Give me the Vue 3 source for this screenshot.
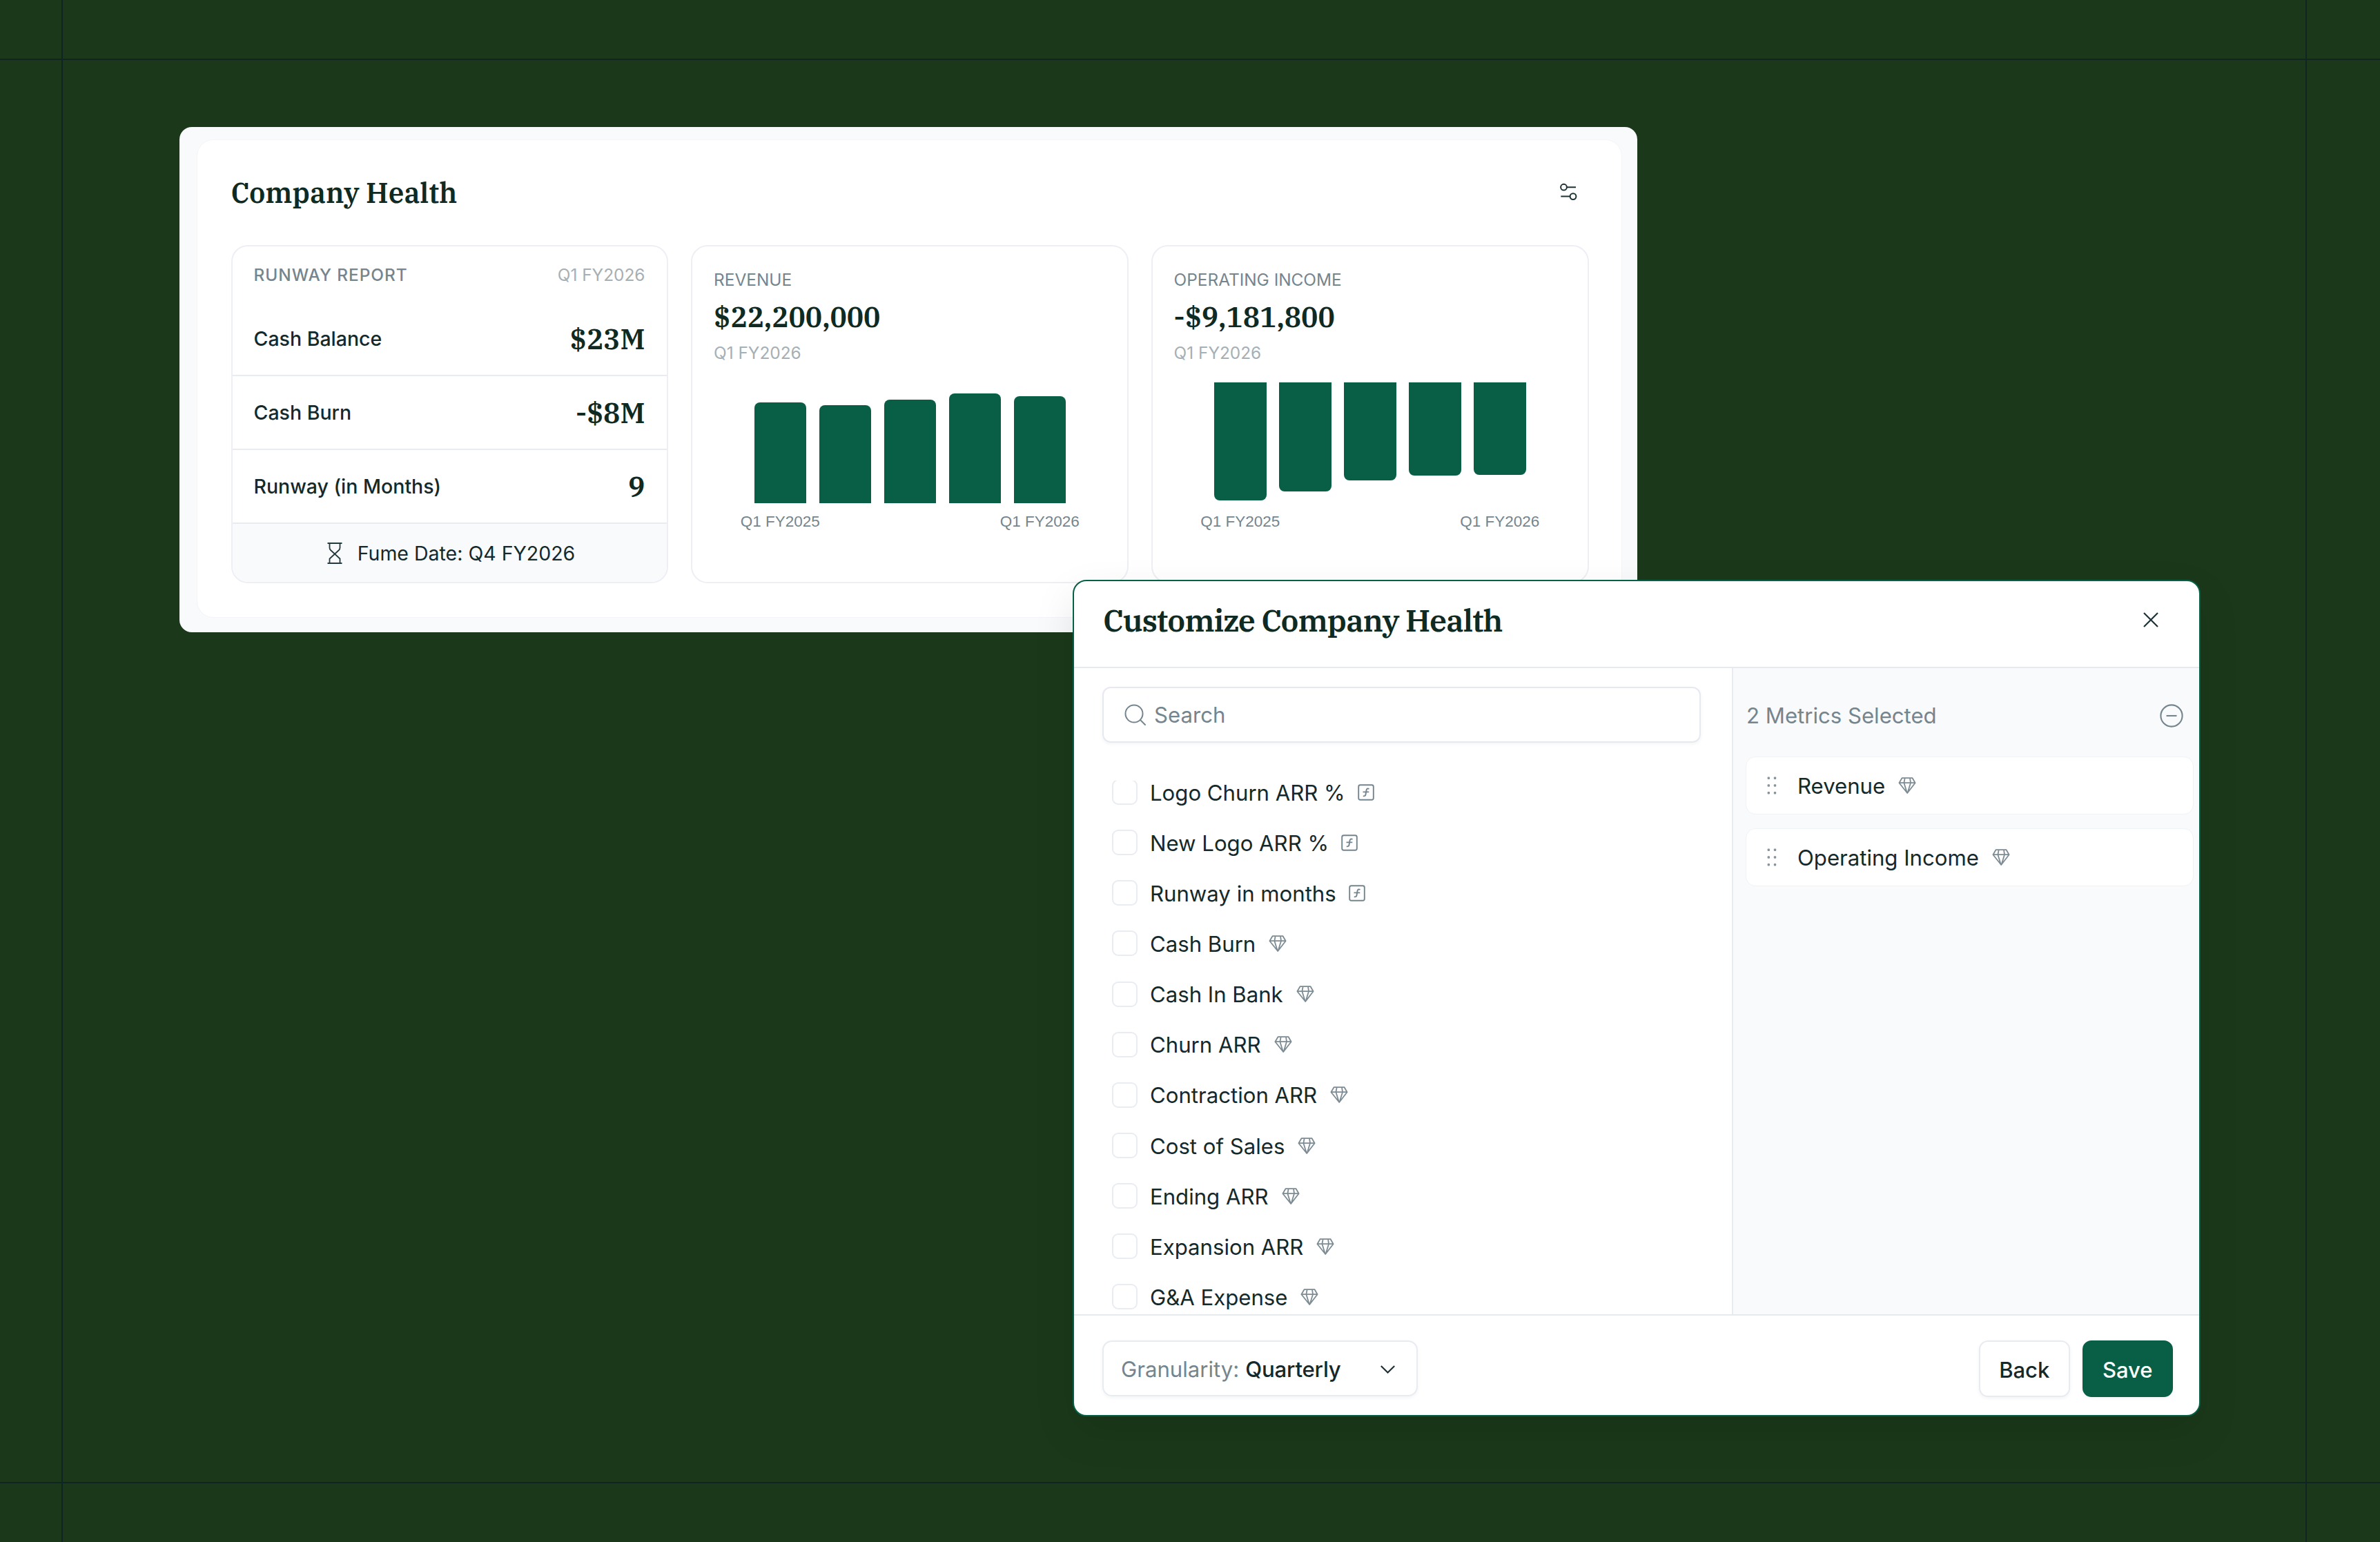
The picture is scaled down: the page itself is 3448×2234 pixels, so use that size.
<script setup>
const runway = [
  { label: 'Cash Balance', value: '$23M' },
  { label: 'Cash Burn', value: '-$8M' },
  { label: 'Runway (in Months)', value: '9' },
]

const metricCards = [
  { name: 'REVENUE', value: '$22,200,000', bars: [146.5, 142.3, 149.6, 159.5, 155], negative: false },
  { name: 'OPERATING INCOME', value: '-$9,181,800', bars: [171, 157.7, 142, 134.5, 133.6], negative: true },
]

const metrics = [
  { name: 'Logo Churn ARR %', formula: true },
  { name: 'New Logo ARR %', formula: true },
  { name: 'Runway in months', formula: true },
  { name: 'Cash Burn' },
  { name: 'Cash In Bank' },
  { name: 'Churn ARR' },
  { name: 'Contraction ARR' },
  { name: 'Cost of Sales' },
  { name: 'Ending ARR' },
  { name: 'Expansion ARR' },
  { name: 'G&A Expense' },
]

const selected = ['Revenue', 'Operating Income']
</script>

<template>
  <main class="canvas">
    <i class="guide v left"></i>
    <i class="guide v right"></i>
    <i class="guide h top"></i>
    <i class="guide h bottom"></i>

    <section class="health">
      <div class="health-inner">
        <header class="health-head">
          <h1>Company Health</h1>
          <svg class="sliders" viewBox="0 0 26 26" fill="none" stroke="#1c3236" stroke-width="2">
            <circle cx="5.5" cy="6.2" r="4.4" />
            <path d="M10 6.2H23M1.3 19.6H14" />
            <circle cx="19" cy="19.6" r="4.4" />
          </svg>
        </header>

        <div class="cards">
          <article class="card">
            <div class="runway-head">
              <span class="runway-title">RUNWAY REPORT</span>
              <span class="period">Q1 FY2026</span>
            </div>
            <div v-for="r in runway" :key="r.label" class="runway-row">
              <span>{{ r.label }}</span>
              <strong>{{ r.value }}</strong>
            </div>
            <div class="fume">
              <svg class="hourglass" viewBox="0 0 22 31" fill="none" stroke="#243a3e" stroke-width="1.8" stroke-linejoin="round">
                <path d="M.5 1H21.5M.5 30H21.5" />
                <path d="M3.5 1V7.5Q3.5 9.5 5 11L18.5 23.5V30M18.5 1V7.5Q18.5 9.5 17 11L3.5 23.5V30" />
              </svg>
              <span>Fume Date: Q4 FY2026</span>
            </div>
          </article>

          <article v-for="m in metricCards" :key="m.name" class="card metric">
            <div class="metric-name">{{ m.name }}</div>
            <div class="metric-value">{{ m.value }}</div>
            <div class="period metric-period">Q1 FY2026</div>
            <div class="bars" :class="{ negative: m.negative }">
              <div v-for="(h, i) in m.bars" :key="i" class="bar" :style="{ height: h + 'px' }"></div>
            </div>
            <div class="axis"><span>Q1 FY2025</span><span>Q1 FY2026</span></div>
          </article>
        </div>
      </div>
    </section>

    <section class="modal">
      <header class="modal-head">
        <h2>Customize Company Health</h2>
        <svg class="close" viewBox="0 0 22 22" fill="none" stroke="#1c3236" stroke-width="2.2">
          <path d="M1 1L21 21M21 1L1 21" />
        </svg>
      </header>

      <div class="modal-body">
        <div class="picker">
          <div class="search">
            <svg viewBox="0 0 31 31" fill="none" stroke="#75858e" stroke-width="2">
              <circle cx="14" cy="14" r="12.5" />
              <path d="M23 23L30 30" stroke-linecap="round" />
            </svg>
            <span>Search</span>
          </div>
          <div class="list">
            <div v-for="m in metrics" :key="m.name" class="option">
              <i class="checkbox"></i>
              <span class="option-name">{{ m.name }}</span>
              <svg v-if="m.formula" class="kind formula" viewBox="0 0 28 28" fill="none" stroke="#75858e" stroke-width="1.9">
                <rect x="3.2" y="3.2" width="21.6" height="21.6" rx="2.5" />
                <path d="M18.5 8.8C16.2 7.9 14.8 8.7 14.5 11L13.5 17C13.2 19 11.8 19.7 9.8 19.2M9.5 13.4H18.3" />
              </svg>
              <svg v-else class="kind" viewBox="0 0 28 28" fill="none" stroke="#7d8c94" stroke-width="1.8" stroke-linejoin="round">
                <path d="M6.5 3.2H21.6L25.6 10.2L14.2 25L2.4 10.2ZM2.4 10.2H25.6M10.7 3.2L9.4 10.2L13.6 24M18 3.2L19 10.2L14.8 24" />
              </svg>
            </div>
          </div>
        </div>

        <aside class="chosen">
          <div class="chosen-head">
            <span>2 Metrics Selected</span>
            <svg viewBox="0 0 34 34" fill="none" stroke="#75858e" stroke-width="2.1">
              <circle cx="17" cy="17" r="15.6" />
              <path d="M9.5 17H24.5" />
            </svg>
          </div>
          <div v-for="s in selected" :key="s" class="chosen-item">
            <svg class="grip" viewBox="0 0 14 26" fill="#87949b">
              <rect x=".6" y=".6" width="3.4" height="3.4" rx="1" /><rect x="9.8" y=".6" width="3.4" height="3.4" rx="1" />
              <rect x=".6" y="11.3" width="3.4" height="3.4" rx="1" /><rect x="9.8" y="11.3" width="3.4" height="3.4" rx="1" />
              <rect x=".6" y="22" width="3.4" height="3.4" rx="1" /><rect x="9.8" y="22" width="3.4" height="3.4" rx="1" />
            </svg>
            <span class="option-name">{{ s }}</span>
            <svg class="kind" viewBox="0 0 28 28" fill="none" stroke="#7d8c94" stroke-width="1.8" stroke-linejoin="round">
              <path d="M6.5 3.2H21.6L25.6 10.2L14.2 25L2.4 10.2ZM2.4 10.2H25.6M10.7 3.2L9.4 10.2L13.6 24M18 3.2L19 10.2L14.8 24" />
            </svg>
          </div>
        </aside>
      </div>

      <footer class="modal-foot">
        <div class="select">
          <span class="select-label">Granularity:</span>
          <span class="select-value">Quarterly</span>
          <svg viewBox="0 0 21 12" fill="none" stroke="#1c3236" stroke-width="2.2">
            <path d="M.8 1L10.5 10.5L20.2 1" />
          </svg>
        </div>
        <div class="actions">
          <button class="btn">Back</button>
          <button class="btn primary">Save</button>
        </div>
      </footer>
    </section>
  </main>
</template>

<style>
body {
  background: #1b391a;
}
</style>

<style scoped>
.canvas {
  position: relative;
  width: 3448px;
  height: 2234px;
  overflow: hidden;
  background: #1b391a;
  font-family: Inter, 'Liberation Sans', sans-serif;
  color: #14292b;
}
.canvas * {
  box-sizing: border-box;
}
h1,
h2 {
  margin: 0;
}
svg {
  display: block;
  flex: none;
}
span,
strong,
h1,
h2,
.metric-name,
.metric-value {
  white-space: nowrap;
}

.guide {
  position: absolute;
  background: #102421;
}
.guide.v {
  top: 0;
  width: 2px;
  height: 100%;
}
.guide.h {
  left: 0;
  width: 100%;
  height: 2px;
}
.guide.left { left: 89px; }
.guide.right { left: 3340px; }
.guide.top { top: 85px; }
.guide.bottom { top: 2147px; }

.health {
  position: absolute;
  left: 260px;
  top: 184px;
  width: 2112px;
  height: 732px;
  padding: 18px 22px 21px 25px;
  border-radius: 18px;
  background: #f9fafc;
}
.health-inner {
  height: 100%;
  padding: 0 47.5px 0 48.5px;
  border: 1px solid #f3f5f8;
  border-radius: 24px;
  background: #fff;
}
.health-head {
  display: flex;
  align-items: center;
  justify-content: space-between;
  height: 152px;
  padding: 0 15.5px 2px 0;
}
h1,
h2,
strong,
.metric-value {
  font-family: 'IBM Plex Serif', 'Liberation Serif', serif;
  font-weight: 600;
  color: #0f2a22;
}
h1 {
  font-size: 40.6px;
}
.sliders {
  width: 26px;
  height: 26px;
}
.cards {
  display: grid;
  grid-template-columns: repeat(3, 1fr);
  gap: 32.6px;
  height: 490px;
}
.card {
  display: flex;
  flex-direction: column;
  border: 2px solid #edeff4;
  border-radius: 24px;
  overflow: hidden;
}
.runway-head {
  display: flex;
  align-items: center;
  justify-content: space-between;
  height: 81px;
  padding: 0 32px 0 31px;
}
.runway-title {
  font-size: 24.4px;
  font-weight: 500;
  letter-spacing: 0.95px;
  color: #75858e;
}
.period {
  font-size: 24.4px;
  color: #a5afb6;
}
.runway-row {
  display: flex;
  align-items: center;
  justify-content: space-between;
  height: 107px;
  padding: 0 32px 0 31px;
  border-bottom: 2px solid #e8ebf0;
  font-size: 28.5px;
  font-weight: 500;
}
.runway-row strong {
  font-size: 40.6px;
}
.fume {
  flex: 1;
  display: flex;
  align-items: center;
  justify-content: center;
  gap: 22px;
  padding-left: 4px;
  background: #f9fafc;
  font-size: 28.5px;
}
.hourglass {
  width: 22px;
  height: 31px;
}
.metric {
  padding: 24px 30px 0 31px;
}
.metric-name {
  font-size: 24.4px;
  line-height: 48px;
  color: #75858e;
}
.metric-value {
  font-size: 40.6px;
  line-height: 59px;
}
.metric-period {
  line-height: 47px;
}
.bars {
  display: flex;
  align-items: flex-end;
  gap: 18.5px;
  height: 175px;
  margin: 19px 0 0 58.5px;
}
.bars.negative {
  align-items: flex-start;
}
.bar {
  width: 75.5px;
  border-radius: 8px 8px 0 0;
  background: #085f46;
}
.negative .bar {
  border-radius: 0 0 8px 8px;
}
.axis {
  display: flex;
  justify-content: space-between;
  width: 451.5px;
  margin-left: 58.5px;
  font-family: 'Liberation Sans', Arial, sans-serif;
  font-size: 22.5px;
  line-height: 54px;
  color: #75858e;
}
.axis span {
  display: flex;
  justify-content: center;
  width: 75.5px;
}

.modal {
  position: absolute;
  left: 1554px;
  top: 840px;
  display: flex;
  flex-direction: column;
  width: 1634px;
  height: 1212px;
  border: 2px solid #066046;
  border-radius: 20px;
  background: #fff;
  box-shadow: 0 24px 60px rgba(0, 0, 0, 0.1);
  overflow: hidden;
  font-size: 31.15px;
}
.modal-head {
  display: flex;
  align-items: center;
  justify-content: space-between;
  height: 126px;
  padding: 0 59px 13px 42px;
  border-bottom: 2px solid #e6e9ee;
}
h2 {
  font-size: 45px;
  letter-spacing: -1.02px;
}
.close {
  width: 22px;
  height: 22px;
}
.modal-body {
  display: flex;
  height: 936px;
}
.picker {
  display: flex;
  flex-direction: column;
  width: 953px;
  padding: 27px 45px 0 41px;
}
.search {
  display: flex;
  align-items: center;
  gap: 12px;
  height: 81px;
  padding-left: 30px;
  border: 2px solid #e6e9ef;
  border-radius: 12px;
  box-shadow: 0 2px 5px rgba(20, 40, 60, 0.05);
  color: #75858e;
}
.search svg {
  width: 31px;
  height: 31px;
}
.list {
  flex: 1;
  min-height: 0;
  margin-top: 55px;
  padding-left: 14px;
  overflow: hidden;
}
.option {
  display: flex;
  align-items: center;
  height: 73.15px;
}
.option:first-child {
  margin-top: -20px;
}
.checkbox {
  width: 37px;
  height: 37px;
  margin-right: 18px;
  border: 2px solid #e9ecf1;
  border-radius: 9px;
}
.option-name {
  padding-top: 2px;
}
.kind {
  width: 28px;
  height: 28px;
  margin-left: 18px;
}
.kind.formula {
  margin-left: 16px;
}
.chosen {
  flex: 1;
  padding: 0 8px 0 18px;
  border-left: 2px solid #e8ebf0;
  background: #f9fafc;
}
.chosen-head {
  display: flex;
  align-items: center;
  justify-content: space-between;
  height: 128px;
  padding: 10px 15px 0 1px;
  color: #75858e;
}
.chosen-head svg {
  width: 34px;
  height: 34px;
}
.chosen-item {
  display: flex;
  align-items: center;
  height: 84px;
  margin-bottom: 20px;
  padding-left: 30px;
  border: 1px solid #eff2f6;
  border-radius: 14px;
  background: #fff;
}
.grip {
  width: 14px;
  height: 26px;
  margin-right: 30px;
}
.modal-foot {
  display: flex;
  flex: 1;
  align-items: flex-start;
  justify-content: space-between;
  padding: 36px 38px 0 41px;
  border-top: 2px solid #e6e9ee;
}
.select {
  display: flex;
  align-items: center;
  width: 457px;
  height: 81px;
  padding: 2px 31px 0 25px;
  border: 2px solid #e8ebf0;
  border-radius: 14px;
  box-shadow: 0 2px 5px rgba(20, 40, 60, 0.05);
}
.select-label {
  margin-right: 9px;
  color: #75858e;
}
.select-value {
  font-weight: 500;
  letter-spacing: -0.2px;
}
.select svg {
  width: 21px;
  height: 12px;
  margin-left: auto;
}
.actions {
  display: flex;
  gap: 18px;
}
.btn {
  width: 131.5px;
  height: 82px;
  padding: 2px 0 0;
  border: 2px solid #e8ebf0;
  border-radius: 13px;
  background: #fff;
  box-shadow: 0 2px 5px rgba(20, 40, 60, 0.05);
  font: 500 31px Inter, 'Liberation Sans', sans-serif;
  color: #14292b;
}
.btn.primary {
  border-color: #085f46;
  background: #085f46;
  color: #fff;
}
</style>
